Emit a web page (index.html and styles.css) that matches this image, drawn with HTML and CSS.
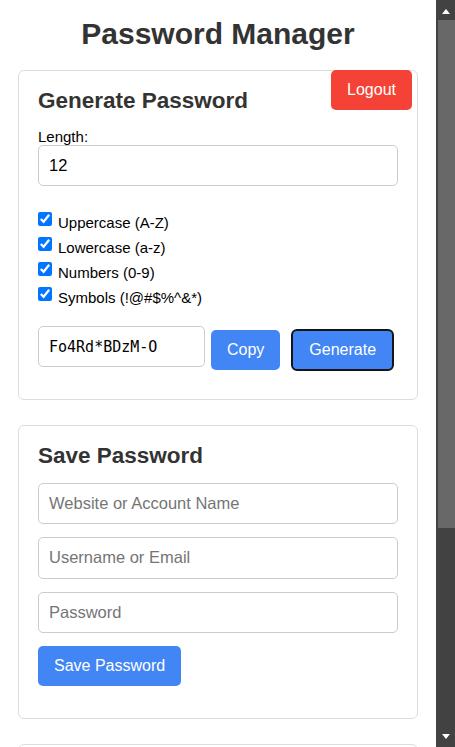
FILE: index.html
```html
<!DOCTYPE html>
<html lang="en">
<head>
<meta charset="utf-8">
<title>Password Manager</title>
<link rel="stylesheet" href="styles.css">
</head>
<body>
<div class="viewport">
  <div class="app">
    <h1 class="title">Password Manager</h1>

    <section class="card card-generate">
      <button class="btn btn-logout">Logout</button>
      <h2 class="card-title">Generate Password</h2>
      <label class="field-label" for="length">Length:</label>
      <input class="text-input" id="length" type="number" value="12">

      <div class="options">
        <label class="option"><input type="checkbox" checked><span>Uppercase (A-Z)</span></label>
        <label class="option"><input type="checkbox" checked><span>Lowercase (a-z)</span></label>
        <label class="option"><input type="checkbox" checked><span>Numbers (0-9)</span></label>
        <label class="option"><input type="checkbox" checked><span>Symbols (!@#$%^&amp;*)</span></label>
      </div>

      <div class="result-row">
        <input class="text-input result-input" type="text" value="Fo4Rd*BDzM-O" readonly>
        <button class="btn btn-copy">Copy</button>
        <button class="btn btn-generate">Generate</button>
      </div>
    </section>

    <section class="card card-save">
      <h2 class="card-title">Save Password</h2>
      <input class="text-input stacked" type="text" placeholder="Website or Account Name">
      <input class="text-input stacked" type="text" placeholder="Username or Email">
      <input class="text-input stacked" type="password" placeholder="Password">
      <button class="btn btn-save">Save Password</button>
    </section>

    <section class="card card-saved" aria-label="Saved passwords"></section>
  </div>
</div>

<div class="scrollbar" aria-hidden="true">
  <div class="sb-button"><span class="sb-arrow sb-arrow-up"></span></div>
  <div class="sb-track">
    <div class="sb-thumb"></div>
  </div>
  <div class="sb-button"><span class="sb-arrow sb-arrow-down"></span></div>
</div>
</body>
</html>
```

FILE: styles.css
```css
html {
  height: 100%;
  background: #ffffff;
}

body {
  display: flex;
  height: 100%;
  margin: 0;
  overflow: hidden;
  background: #ffffff;
  color: #000000;
  font-family: "Liberation Sans", Arial, sans-serif;
  font-size: 15px;
}

.viewport {
  flex: 1;
  min-width: 0;
  overflow: hidden;
}

.app {
  width: 400px;
  margin-left: 18px;
  padding-top: 17px;
}

.title {
  margin: 0 0 18.5px;
  font-size: 30px;
  font-weight: bold;
  color: #333333;
  text-align: center;
}

.card {
  position: relative;
  box-sizing: border-box;
  border: 1px solid #dddddd;
  border-radius: 6px;
  padding: 17px 19px 20px;
  margin-bottom: 25px;
  background: #ffffff;
}

.card-title {
  margin: 0 0 14px;
  font-size: 22.5px;
  font-weight: bold;
  color: #333333;
}

.field-label {
  display: block;
  font-size: 15px;
}

.text-input {
  display: block;
  box-sizing: border-box;
  width: 100%;
  height: 41.4px;
  margin: 0;
  padding: 0 10px;
  border: 1px solid #cccccc;
  border-radius: 5px;
  background: #ffffff;
  color: #000000;
  font-family: "Liberation Sans", Arial, sans-serif;
  font-size: 16.5px;
  outline: none;
}

.text-input::placeholder {
  color: #757575;
}

.text-input::-webkit-inner-spin-button,
.text-input::-webkit-outer-spin-button {
  -webkit-appearance: none;
  margin: 0;
}

.options {
  margin-top: 24px;
}

.option {
  display: flex;
  align-items: center;
  height: 25px;
  font-size: 15px;
}

.option input {
  width: 14px;
  height: 14px;
  margin: 0 6px 7px 0;
}

.result-row {
  display: flex;
  align-items: flex-start;
  margin-top: 16px;
  margin-bottom: 8px;
}

.result-input {
  width: 167px;
  font-family: "DejaVu Sans Mono", "Liberation Mono", monospace;
  font-size: 15px;
}

.btn {
  box-sizing: border-box;
  height: 40px;
  padding: 0 16px;
  border: none;
  border-radius: 5px;
  background: #4285f4;
  color: #ffffff;
  font-family: "Liberation Sans", Arial, sans-serif;
  font-size: 16px;
  cursor: pointer;
}

.btn-copy {
  margin: 4px 0 0 6px;
}

.btn-generate {
  height: 42px;
  margin: 3px 0 0 11px;
  border: 2px solid #151515;
  border-radius: 6px;
}

.btn-logout {
  position: absolute;
  top: -1px;
  right: 5px;
  width: 81px;
  padding: 0;
  background: #f44336;
}

.stacked {
  margin-bottom: 13px;
}

.btn-save {
  display: block;
  margin-bottom: 12px;
}

.card-saved {
  height: 320px;
}

/* window scrollbar */
.scrollbar {
  flex: none;
  display: flex;
  flex-direction: column;
  width: 19px;
  height: 100%;
  background: #424242;
}

.sb-button {
  flex: none;
  display: flex;
  align-items: center;
  justify-content: center;
  height: 20px;
  padding-left: 1px;
}

.sb-arrow {
  width: 0;
  height: 0;
  border-left: 4.5px solid transparent;
  border-right: 4.5px solid transparent;
}

.sb-arrow-up {
  border-bottom: 5px solid #ffffff;
  margin-top: 2px;
}

.sb-arrow-down {
  border-top: 5px solid #ffffff;
  margin-top: -1px;
}

.sb-track {
  flex: 1;
}

.sb-thumb {
  height: 508px;
  margin-left: 2px;
  background: #686868;
}
```
